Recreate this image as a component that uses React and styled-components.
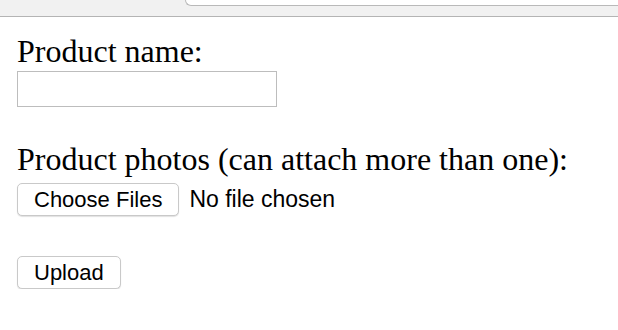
import React from 'react';
import styled, { createGlobalStyle } from 'styled-components';

const GlobalStyle = createGlobalStyle`
  html, body {
    margin: 0;
    padding: 0;
    background: #fff;
  }
`;

// browser chrome strip at the top
const ChromeBar = styled.div`
  height: 16px;
  background: #f1f1f1;
  border-bottom: 1px solid #b4b4b4;
  display: flex;
  justify-content: flex-end;
`;
const AddressBar = styled.div`
  width: 432px;
  height: 5px;
  background: #fff;
  border: 1px solid #b9b9b9;
  border-top: none;
  border-right: none;
  border-radius: 0 0 0 6px;
`;

const FormStyled = styled.form`
  display: flex;
  flex-direction: column;
  align-items: flex-start;
  padding: 16px 0 0 17px;
`;
const Label = styled.label`
  font-family: 'Liberation Serif', 'Times New Roman', serif;
  font-size: 32px;
  line-height: 36px;
  color: #000;
  margin-top: ${(p) => p.$gap || 0}px;
`;
const TextInput = styled.input`
  box-sizing: border-box;
  width: 260px;
  height: 36px;
  margin-top: 2px;
  border: 1px solid #bdbdbd;
  padding: 0 6px;
  font-size: 20px;
  outline: none;
`;
const FileRow = styled.div`
  display: flex;
  align-items: center;
  gap: 10px;
  margin-top: 6px;
`;
const Button = styled.button`
  box-sizing: border-box;
  height: 33px;
  padding: 0 16px;
  margin-top: ${(p) => p.$gap || 0}px;
  background: #fff;
  border: 1px solid #c9c9c9;
  border-radius: 5px;
  box-shadow: 0 1px 1px rgba(0, 0, 0, 0.12);
  font-family: 'Liberation Sans', Arial, sans-serif;
  font-size: 22px;
  color: #000;
  cursor: pointer;
`;
const FileStatus = styled.span`
  font-family: 'Liberation Sans', Arial, sans-serif;
  font-size: 23px;
  color: #000;
`;

const App = () => {
  return (
    <>
      <GlobalStyle />
      <ChromeBar>
        <AddressBar />
      </ChromeBar>
      <FormStyled onSubmit={(e) => e.preventDefault()}>
        <Label htmlFor="name">Product name:</Label>
        <TextInput id="name" type="text" />
        <Label $gap={34}>Product photos (can attach more than one):</Label>
        <FileRow>
          <Button type="button">Choose Files</Button>
          <FileStatus>No file chosen</FileStatus>
        </FileRow>
        <Button type="submit" $gap={40}>
          Upload
        </Button>
      </FormStyled>
    </>
  );
};

export default App;
